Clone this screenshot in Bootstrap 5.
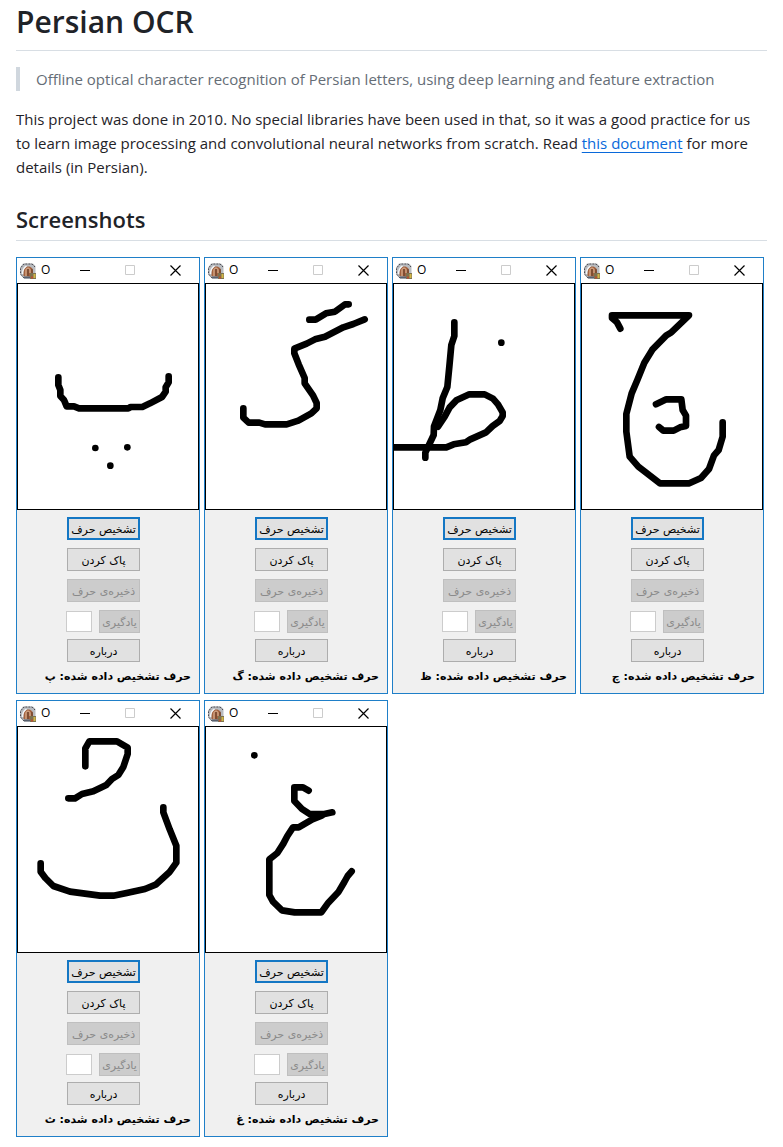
<!DOCTYPE html>
<html lang="en">
<head>
<meta charset="utf-8">
<meta name="viewport" content="width=device-width, initial-scale=1">
<title>Persian OCR</title>
<link href="https://cdn.jsdelivr.net/npm/bootstrap@5.3.0/dist/css/bootstrap.min.css" rel="stylesheet">
<style>
  body { font-family: "Open Sans", "Noto Sans", sans-serif; font-size: 15px; line-height: 24px; color: #1f2328; }
  h1, h2 { font-weight: 600; border-bottom: 1px solid #d8dee4; }
  h1 { font-size: 30px; line-height: 44px; padding-bottom: 6px; }
  h2 { font-size: 22px; line-height: 32px; padding-bottom: 5px; }
  .tagline { border-left: 4px solid #d0d7de; color: #656d76; }
  a { color: #0969da; text-underline-offset: 3px; }
  .shots { gap: 6px 4px; }
  .app-window { width: 184px; height: 437px; border: 1px solid #1f7fc8; background: #f0f0f0; color: #000; }
  .title-bar { height: 25px; background: #fff; font: 12px/23px "Open Sans", sans-serif; padding: 0 1px 0 3px; }
  .title-bar span { padding-left: 5px; margin-bottom: 2px; }
  .title-bar button { width: 45px; height: 25px; border: 0; padding: 0; background: none; }
  .title-bar button svg { display: block; margin: auto; }
  .ink { height: 227px; background: #fff; border: 1px solid #000; }
  .ink svg { display: block; width: 100%; height: 100%; }
  .controls { padding: 7px 8px 0; font: 11px/19px "DejaVu Sans", sans-serif; }
  .stack { width: 73px; margin-right: 51px; gap: 8px; }
  .stack button { height: 23px; border: 1px solid #adadad; background: #e1e1e1; padding: 1px 0 0; color: #000; white-space: nowrap; }
  .stack button.main-action { border: 2px solid #1477c4; }
  .stack button:disabled { background: #ccc; border-color: #bfbfbf; color: #8a8a8a; }
  .learn { gap: 7px; margin-bottom: -2px; }
  .learn button { width: 41px; }
  .learn input { width: 26px; height: 21px; border: 1px solid #ccc; background: #fff; padding: 0; }
  .result { font-weight: 700; line-height: 20px; margin-top: 5px; white-space: nowrap; }
</style>
</head>
<body>
<svg class="d-none" aria-hidden="true">
  <symbol id="app-icon" viewBox="0 0 16 16">
    <path d="M3 .5h10l2.500 2.500v12.500H4L.5 12V4z" fill="#b9bcc0"/>
    <path d="M4 15L.5 11V5L4 1h8l3 3" fill="none" stroke="#4c4c54" stroke-dasharray="2 1"/>
    <path d="M3.500 13V8c0-6 9.500-6 9.500 0v6z" fill="#a3623f"/>
    <path d="M2.500 11c0-4 1-6 4-8" fill="none" stroke="#f4f6f8" stroke-width="1.500"/>
    <path d="M6 13V7c0-2.500 4-2.500 4 0v3" fill="none" stroke="#e6c0a2"/>
    <path d="M8 6v7M12 6v5" stroke="#5e3a28"/>
    <path d="M10 10h6v6h-6z" fill="#7d7250"/>
    <path d="M11 14.500h2" stroke="#b84d33" stroke-width="2"/>
    <path d="M14.500 11v4" stroke="#d2b646" stroke-width="2"/>
    <path d="M4 14.500h6" stroke="#59616e" stroke-width="2"/>
  </symbol>
</svg>

<main class="px-3">
  <h1 class="mb-3">Persian OCR</h1>
  <blockquote class="tagline ps-3 mb-3">Offline optical character recognition of Persian letters, using deep learning and feature extraction</blockquote>
  <p class="mb-4">This project was done in 2010. No special libraries have been used in that, so it was a good practice for us to learn image processing and convolutional neural networks from scratch. Read <a href="#document">this document</a> for more details (in Persian).</p>
  <h2 class="mb-3">Screenshots</h2>
  <div class="shots d-flex flex-wrap" id="shots"></div>
</main>

<script src="https://cdn.jsdelivr.net/npm/bootstrap@5.3.0/dist/js/bootstrap.bundle.min.js"></script>
<script>
  // Each drawing: recognised letter, viewBox origin, pen strokes, dots.
  const drawings = [
    { letter: 'پ', origin: '24 102', strokes: ['M145 382V405L151 420V438L162 450L170 469H192L207 475H355L362 471H397L420 460L456 441L467 425V412L476 397V379'], dots: [[256, 594], [352, 592], [301, 647]] },
    { letter: 'گ', origin: '18 102', strokes: ['M328 209H347L378 190L405 185L435 163H446', 'M494 208L460 222L430 232L375 260L345 268L320 281L283 296V310L296 343L314 384V400L339 436L350 459V475L334 490L295 512L260 523H195L178 518H146L130 503V475'], dots: [] },
    { letter: 'ظ', origin: '21 102', strokes: ['M202 217V258L193 285L187 350L181 411L167 445L160 480L141 529L140 555L115 608V623', 'M0 592H178L200 583L237 577L250 568L297 547L317 528L338 513L347 498V487L333 463L318 446L293 433H247L208 451L188 472L173 500L153 530'], dots: [[343, 278]] },
    { letter: 'چ', origin: '21 102', strokes: ['M136 236L126 217L111 204V196H342L288 248L274 256L232 299L208 338L187 390L170 430L154 492V545L164 620L190 650L255 700H343L378 684L402 657L417 616L431 600L443 560V517', 'M243 463L274 448H319L323 480L333 497V528L315 532L296 542H265L252 531'], dots: [] },
    { letter: 'ث', origin: '24 96', strokes: ['M226 214V160L238 139H321L353 158V177L340 216L325 240L306 252L289 270L250 289L216 297L195 310H175', 'M460 337V352L479 403L499 452V503L478 532L437 569L405 582L350 594L310 602H270L180 590L130 573L106 549L92 530V505'], dots: [] },
    { letter: 'غ', origin: '18 96', strokes: ['M326 287L309 277H283V318L306 342L329 357H373L397 352', 'M365 362L337 373L296 397H279L262 423L250 446L232 474L208 493V600L219 620L246 646L284 652H364L385 623L416 590L433 561L443 543L455 529'], dots: [[163, 181]] }
  ];

  document.getElementById('shots').innerHTML = drawings.map((d, i) => `
    <section class="app-window d-flex flex-column">
      <header class="title-bar d-flex align-items-center">
        <svg width="16" height="16" aria-hidden="true"><use href="#app-icon"/></svg>
        <span class="me-auto">O</span>
        <button type="button" aria-label="Minimize"><svg width="11" height="11"><path d="M0 5.500H10" stroke="#000"/></svg></button>
        <button type="button" aria-label="Maximize" disabled><svg width="11" height="11"><path d="M.5.5h9v9h-9z" fill="none" stroke="#ccc"/></svg></button>
        <button type="button" aria-label="Close"><svg width="11" height="11"><path d="M.5.5l10 10M10.500.5l-10 10" stroke="#000" stroke-width="1.200"/></svg></button>
      </header>
      <div class="ink"><svg viewBox="${d.origin} 540 675" role="img" aria-label="${d.letter}">
        <g fill="none" stroke="#000" stroke-width="20" stroke-linecap="round" stroke-linejoin="round">${d.strokes.map(s => `<path d="${s}"/>`).join('')}</g>
        ${d.dots.map(([x, y]) => `<circle cx="${x}" cy="${y}" r="10"/>`).join('')}
      </svg></div>
      <div class="controls" dir="rtl" lang="fa">
        <div class="stack d-flex flex-column">
          <button type="button" class="main-action">تشخیص حرف</button>
          <button type="button">پاک کردن</button>
          <button type="button" disabled>ذخیره‌ی حرف</button>
          <div class="learn d-flex align-items-center">
            <button type="button" class="flex-shrink-0" disabled>یادگیری</button>
            <input type="text" class="flex-shrink-0" id="letter-${i}" aria-label="حرف">
          </div>
          <button type="button">درباره</button>
        </div>
        <div class="result">حرف تشخیص داده شده: ${d.letter}</div>
      </div>
    </section>`).join('');
</script>
</body>
</html>
